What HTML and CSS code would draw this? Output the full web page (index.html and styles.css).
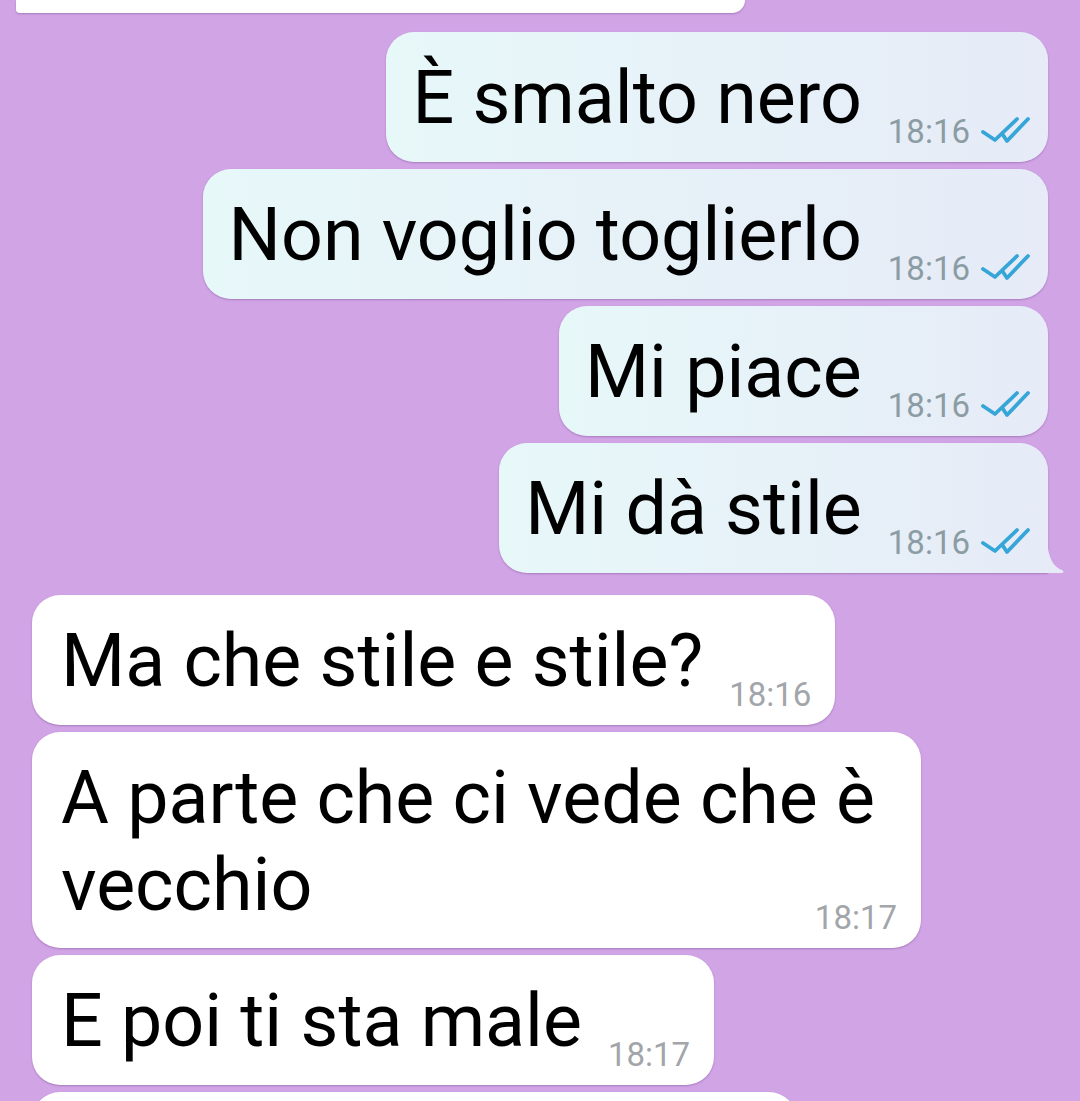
FILE: index.html
```html
<!DOCTYPE html>
<html lang="it">

<head>
    <meta charset="UTF-8">
    <meta name="viewport" content="width=device-width, initial-scale=1.0">
    <title>Chat</title>
    <link rel="stylesheet" href="styles.css">
</head>

<body>
    <div class="chat">
        <!-- bolla precedente, tagliata in alto -->
        <div class="bubble in top-cut"></div>

        <div class="bubble out">
            <div class="text">È smalto nero</div>
            <div class="meta">
                <span class="time">18:16</span>
                <svg class="ticks" viewBox="0 0 50 28" width="50" height="28">
                    <path d="M3 16 L15 24 L37 3" />
                    <path d="M23 19 L27 25 L48 3" />
                </svg>
            </div>
        </div>
        <div class="bubble out">
            <div class="text">Non voglio toglierlo</div>
            <div class="meta">
                <span class="time">18:16</span>
                <svg class="ticks" viewBox="0 0 50 28" width="50" height="28">
                    <path d="M3 16 L15 24 L37 3" />
                    <path d="M23 19 L27 25 L48 3" />
                </svg>
            </div>
        </div>
        <div class="bubble out">
            <div class="text">Mi piace</div>
            <div class="meta">
                <span class="time">18:16</span>
                <svg class="ticks" viewBox="0 0 50 28" width="50" height="28">
                    <path d="M3 16 L15 24 L37 3" />
                    <path d="M23 19 L27 25 L48 3" />
                </svg>
            </div>
        </div>
        <div class="bubble out last">
            <div class="text">Mi dà stile</div>
            <div class="meta">
                <span class="time">18:16</span>
                <svg class="ticks" viewBox="0 0 50 28" width="50" height="28">
                    <path d="M3 16 L15 24 L37 3" />
                    <path d="M23 19 L27 25 L48 3" />
                </svg>
            </div>
            <svg class="tail" viewBox="0 0 18 40" width="18" height="40">
                <path d="M0 0 C0 20 4 33 15 37 Q18 39 15 40 L0 40 Z" />
            </svg>
        </div>

        <div class="bubble in first">
            <div class="text">Ma che stile e stile?</div>
            <div class="meta">
                <span class="time">18:16</span>
            </div>
        </div>
        <div class="bubble in multi">
            <div class="text">A parte che ci vede che è<br>vecchio</div>
            <div class="meta">
                <span class="time">18:17</span>
            </div>
        </div>
        <div class="bubble in">
            <div class="text">E poi ti sta male</div>
            <div class="meta">
                <span class="time">18:17</span>
            </div>
        </div>
        <div class="bubble in bottom-cut"></div>
    </div>
</body>

</html>
```

FILE: styles.css
```css
body {
    margin: 0;
    background-color: #d1a4e6;
    font-family: Roboto, "Noto Sans", Arial, sans-serif;
    height: 1101px;
    overflow: hidden;
}

.chat {
    display: flex;
    flex-direction: column;
    gap: 7px;
}

.bubble {
    position: relative;
    display: flex;
    align-items: flex-end;
    padding: 23px 18px 20px 26px;
    border-radius: 28px;
    box-shadow: 0 1px 2px rgba(90, 50, 110, 0.35);
}

.bubble.out {
    align-self: flex-end;
    margin-right: 32px;
    background: linear-gradient(to right, #e7f8f9, #e6ebf7);
}

.bubble.out.last {
    border-bottom-right-radius: 0;
}

.bubble.in {
    align-self: flex-start;
    margin-left: 32px;
    padding-right: 24px;
    padding-left: 29px;
    background: #fff;
}

.bubble.in.first {
    margin-top: 15px;
}

.text {
    font-size: 73.5px;
    line-height: 87px;
    color: #000;
    white-space: nowrap;
}

.meta {
    display: flex;
    align-items: center;
    gap: 10px;
    margin-left: 26px;
    margin-bottom: -3px;
}

.time {
    font-size: 33px;
    line-height: 26px;
    color: #8c9ca3;
}

.bubble.in .time {
    color: #a2a5a9;
}

.ticks {
    fill: none;
    stroke: #36a5d8;
    stroke-width: 3.8;
    stroke-linecap: round;
    stroke-linejoin: round;
    margin-top: -4px;
}

.tail {
    position: absolute;
    right: -17px;
    bottom: 0;
    fill: #e6ebf7;
}

.bubble.multi {
    flex-direction: column;
    align-items: stretch;
    padding-right: 24px;
}

.bubble.multi .text {
    padding-right: 22px;
}

.bubble.multi .meta {
    align-self: flex-end;
    margin-top: -24px;
}

.bubble.in.top-cut {
    height: 13px;
    width: 729px;
    padding: 0;
    margin-left: 16px;
    margin-bottom: 12px;
    border-radius: 0 0 28px 8px;
}

.bubble.in.bottom-cut {
    height: 60px;
    width: 765px;
    padding: 0;
}
```
